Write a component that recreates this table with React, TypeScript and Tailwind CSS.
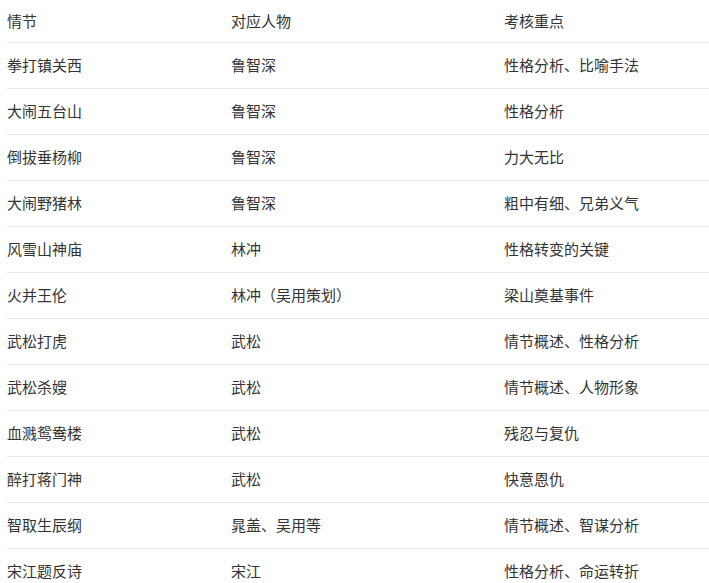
const rows: [string, string, string][] = [
  ["拳打镇关西", "鲁智深", "性格分析、比喻手法"],
  ["大闹五台山", "鲁智深", "性格分析"],
  ["倒拔垂杨柳", "鲁智深", "力大无比"],
  ["大闹野猪林", "鲁智深", "粗中有细、兄弟义气"],
  ["风雪山神庙", "林冲", "性格转变的关键"],
  ["火并王伦", "林冲（吴用策划）", "梁山奠基事件"],
  ["武松打虎", "武松", "情节概述、性格分析"],
  ["武松杀嫂", "武松", "情节概述、人物形象"],
  ["血溅鸳鸯楼", "武松", "残忍与复仇"],
  ["醉打蒋门神", "武松", "快意恩仇"],
  ["智取生辰纲", "晁盖、吴用等", "情节概述、智谋分析"],
  ["宋江题反诗", "宋江", "性格分析、命运转折"],
];

const Row = ({ cells, header }: { cells: [string, string, string]; header?: boolean }) => (
  <div
    className={`flex items-center border-b border-[#e6e6e6] ${header ? "h-[43px]" : "h-[46px]"}`}
  >
    <div className="w-[224px] shrink-0">{cells[0]}</div>
    <div className="w-[273px] shrink-0">{cells[1]}</div>
    <div className="flex-1">{cells[2]}</div>
  </div>
);

export default function App() {
  return (
    <div
      className="w-[709px] h-[583px] overflow-hidden bg-white pl-[7px] text-[15px] text-[#333]"
      style={{ fontFamily: '"Microsoft YaHei", "Noto Sans CJK SC", sans-serif' }}
    >
      <Row cells={["情节", "对应人物", "考核重点"]} header />
      {rows.map((r) => (
        <Row key={r[0]} cells={r} />
      ))}
    </div>
  );
}
